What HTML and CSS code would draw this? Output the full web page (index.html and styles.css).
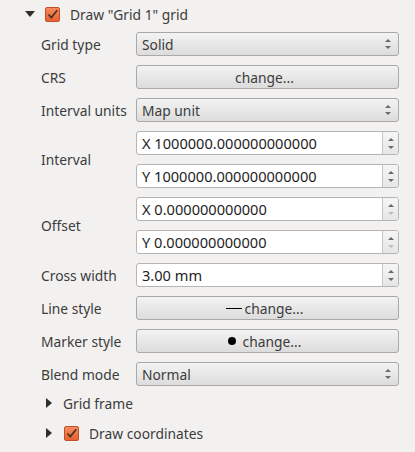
FILE: index.html
```html
<!DOCTYPE html>
<html>
<head>
<meta charset="utf-8">
<link rel="stylesheet" href="styles.css">
</head>
<body>
<div class="panel">
  <div class="group-head">
    <span class="tri-down"></span>
    <span class="check"><svg width="15" height="15" viewBox="0 0 15 15"><path d="M3.5 7.5 L6.3 10.6 L12.2 3.2" fill="none" stroke="#4a3028" stroke-width="1.7"/></svg></span>
    <span class="head-text">Draw "Grid 1" grid</span>
  </div>
  <div class="form">
    <div class="lbl">Grid type</div>
    <div class="combo"><span>Solid</span><span class="updown"></span></div>

    <div class="lbl">CRS</div>
    <div class="btn">change...</div>

    <div class="lbl">Interval units</div>
    <div class="combo"><span>Map unit</span><span class="updown"></span></div>

    <div class="lbl span2">Interval</div>
    <div class="spin"><span class="val">X 1000000.000000000000</span><span class="spinbtn"><i class="up"></i><i class="dn"></i></span></div>
    <div class="spin"><span class="val">Y 1000000.000000000000</span><span class="spinbtn"><i class="up"></i><i class="dn"></i></span></div>

    <div class="lbl span2">Offset</div>
    <div class="spin"><span class="val">X 0.000000000000</span><span class="spinbtn"><i class="up"></i><i class="dn off"></i></span></div>
    <div class="spin"><span class="val">Y 0.000000000000</span><span class="spinbtn"><i class="up"></i><i class="dn off"></i></span></div>

    <div class="lbl">Cross width</div>
    <div class="spin"><span class="val">3.00 mm</span><span class="spinbtn"><i class="up"></i><i class="dn"></i></span></div>

    <div class="lbl">Line style</div>
    <div class="btn"><span class="dash"></span>change...</div>

    <div class="lbl">Marker style</div>
    <div class="btn"><span class="dot"></span>change...</div>

    <div class="lbl">Blend mode</div>
    <div class="combo"><span>Normal</span><span class="updown"></span></div>
  </div>
  <div class="sub first">
    <span class="tri-right"></span>
    <span class="sub-text">Grid frame</span>
  </div>
  <div class="sub">
    <span class="tri-right"></span>
    <span class="check small"><svg width="15" height="15" viewBox="0 0 15 15"><path d="M3.5 7.5 L6.3 10.6 L12.2 3.2" fill="none" stroke="#4a3028" stroke-width="1.7"/></svg></span>
    <span class="sub-text">Draw coordinates</span>
  </div>
</div>
</body>
</html>
```

FILE: styles.css
```css
html, body {
  margin: 0;
  padding: 0;
  background: #f2f1f0;
}
body {
  font-family: "Noto Sans", "Open Sans", sans-serif;
  font-size: 13.8px;
  color: #3c3c3c;
  width: 415px;
  height: 452px;
  overflow: hidden;
}
.group-head {
  height: 28px;
  display: flex;
  align-items: center;
  padding-left: 25px;
}
.tri-down {
  width: 0;
  height: 0;
  border-left: 5px solid transparent;
  border-right: 5px solid transparent;
  border-top: 6px solid #2e2e2e;
  margin-right: 10px;
}
.check {
  width: 15px;
  height: 15px;
  box-sizing: border-box;
  border: 1px solid #c0502a;
  border-radius: 2px;
  background: linear-gradient(#f58a5c, #e8622e);
  display: inline-flex;
  position: relative;
  flex: none;
}
.check svg {
  position: absolute;
  left: -1px;
  top: -1px;
}
.head-text {
  margin-left: 10px;
}
.form {
  display: grid;
  grid-template-columns: 95px 263px;
  grid-auto-rows: 24px;
  row-gap: 9px;
  padding-left: 41px;
  margin-top: 4px;
}
.lbl {
  display: flex;
  align-items: center;
  white-space: nowrap;
}
.span2 {
  grid-row: span 2;
}
.span2 + .spin + .spin {
  grid-column: 2;
}
.combo, .btn {
  box-sizing: border-box;
  border: 1px solid #a9a9a9;
  border-radius: 3px;
  background: linear-gradient(#f3f3f3, #dcdcdc);
  display: flex;
  align-items: center;
  color: #3c3c3c;
}
.combo {
  padding-left: 5px;
  justify-content: space-between;
  padding-right: 10px;
}
.btn {
  justify-content: center;
  padding-right: 6px;
}
.updown {
  width: 0;
  height: 10px;
  position: relative;
}
.updown::before, .updown::after {
  content: "";
  position: absolute;
  left: -3px;
  border-left: 3px solid transparent;
  border-right: 3px solid transparent;
}
.updown::before {
  top: 0;
  border-bottom: 3px solid #6a6a6a;
}
.updown::after {
  bottom: 0;
  border-top: 3px solid #6a6a6a;
}
.spin {
  box-sizing: border-box;
  border: 1px solid #b5b5b5;
  border-radius: 3px;
  background: #ffffff;
  display: flex;
  align-items: stretch;
  color: #1e1e1e;
}
.val {
  flex: 1;
  display: flex;
  align-items: center;
  padding-left: 5px;
  font-size: 14.6px;
  white-space: nowrap;
}
.spinbtn {
  width: 15px;
  border-left: 1px solid #c6c6c6;
  background: linear-gradient(#f6f6f6, #e6e6e6);
  border-radius: 0 2px 2px 0;
  display: flex;
  flex-direction: column;
  align-items: center;
  justify-content: center;
  gap: 5px;
}
.spinbtn i {
  display: block;
  width: 0;
  height: 0;
  border-left: 3px solid transparent;
  border-right: 3px solid transparent;
}
.spinbtn .up {
  border-bottom: 3px solid #6a6a6a;
}
.spinbtn .dn {
  border-top: 3px solid #6a6a6a;
}
.spinbtn .dn.off {
  border-top-color: #bdbdbd;
}
.dash {
  width: 16px;
  height: 1px;
  background: #000;
  margin-right: 3px;
}
.dot {
  width: 8px;
  height: 8px;
  border-radius: 50%;
  background: #000;
  margin-right: 7px;
}
.sub {
  height: 30px;
  display: flex;
  align-items: center;
  padding-left: 46px;
}
.sub.first {
  margin-top: 2px;
}
.tri-right {
  width: 0;
  height: 0;
  border-top: 5px solid transparent;
  border-bottom: 5px solid transparent;
  border-left: 6px solid #2e2e2e;
  margin-right: 11px;
}
.sub .check {
  margin-left: 1px;
  margin-right: 10px;
}
```
